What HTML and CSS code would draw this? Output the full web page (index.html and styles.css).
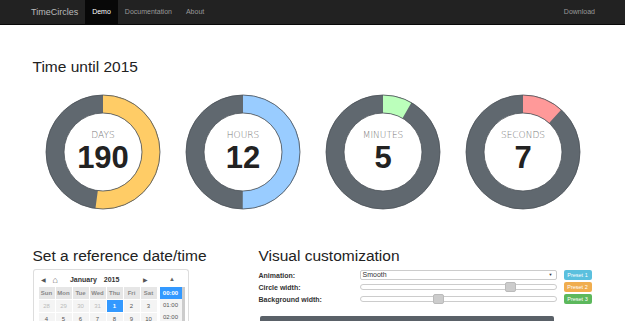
FILE: index.html
```html
<!DOCTYPE html>
<html lang="en">
<head>
    <meta charset="UTF-8">
    <meta name="viewport" content="width=device-width, initial-scale=1.0">
    <title>TimeCircles</title>
    <link rel="stylesheet" href="styles.css">
</head>
<body>
    <nav class="navbar">
        <a class="brand" href="#">TimeCircles</a>
        <a class="nav-link active" href="#">Demo</a>
        <a class="nav-link" href="#">Documentation</a>
        <a class="nav-link" href="#">About</a>
        <a class="nav-link right" href="#">Download</a>
    </nav>

    <main class="container">
        <h1>Time until 2015</h1>

        <div class="circles">
            <div class="circle">
                <svg width="116" height="116" viewBox="0 0 116 116">
                    <circle cx="58" cy="58" r="48" class="ring-bg"/>
                    <circle cx="58" cy="58" r="48" class="ring" stroke="#ffcc66" stroke-dasharray="157 400" transform="rotate(-90 58 58)"/>
                    <circle cx="58" cy="58" r="57" class="edge"/>
                    <circle cx="58" cy="58" r="39" class="edge"/>
                    <text x="58" y="44" class="unit">DAYS</text>
                    <text x="58" y="74" class="value">190</text>
                </svg>
            </div>
            <div class="circle">
                <svg width="116" height="116" viewBox="0 0 116 116">
                    <circle cx="58" cy="58" r="48" class="ring-bg"/>
                    <circle cx="58" cy="58" r="48" class="ring" stroke="#99ccff" stroke-dasharray="150.8 400" transform="rotate(-90 58 58)"/>
                    <circle cx="58" cy="58" r="57" class="edge"/>
                    <circle cx="58" cy="58" r="39" class="edge"/>
                    <text x="58" y="44" class="unit">HOURS</text>
                    <text x="58" y="74" class="value">12</text>
                </svg>
            </div>
            <div class="circle">
                <svg width="116" height="116" viewBox="0 0 116 116">
                    <circle cx="58" cy="58" r="48" class="ring-bg"/>
                    <circle cx="58" cy="58" r="48" class="ring" stroke="#bbffbb" stroke-dasharray="25.1 400" transform="rotate(-90 58 58)"/>
                    <circle cx="58" cy="58" r="57" class="edge"/>
                    <circle cx="58" cy="58" r="39" class="edge"/>
                    <text x="58" y="44" class="unit">MINUTES</text>
                    <text x="58" y="74" class="value">5</text>
                </svg>
            </div>
            <div class="circle">
                <svg width="116" height="116" viewBox="0 0 116 116">
                    <circle cx="58" cy="58" r="48" class="ring-bg"/>
                    <circle cx="58" cy="58" r="48" class="ring" stroke="#ff9999" stroke-dasharray="35.2 400" transform="rotate(-90 58 58)"/>
                    <circle cx="58" cy="58" r="57" class="edge"/>
                    <circle cx="58" cy="58" r="39" class="edge"/>
                    <text x="58" y="44" class="unit">SECONDS</text>
                    <text x="58" y="74" class="value">7</text>
                </svg>
            </div>
        </div>

        <div class="bottom">
            <section>
                <h2>Set a reference date/time</h2>
                <div class="picker">
                    <div class="calendar">
                        <div class="cal-head">
                            <span class="arrow">&#9664;</span>
                            <span class="home">&#8962;</span>
                            <span class="month">January</span>
                            <span class="month">2015</span>
                            <span class="arrow next">&#9654;</span>
                        </div>
                        <div class="days">
                            <span class="dow">Sun</span><span class="dow">Mon</span><span class="dow">Tue</span><span class="dow">Wed</span><span class="dow">Thu</span><span class="dow">Fri</span><span class="dow">Sat</span>
                            <span class="muted">28</span><span class="muted">29</span><span class="muted">30</span><span class="muted">31</span><span class="today">1</span><span>2</span><span>3</span>
                            <span>4</span><span>5</span><span>6</span><span>7</span><span>8</span><span>9</span><span>10</span>
                        </div>
                    </div>
                    <div class="times">
                        <div class="time-up">&#9650;</div>
                        <div class="time-list">
                            <span class="selected">00:00</span>
                            <span>01:00</span>
                            <span>02:00</span>
                        </div>
                    </div>
                </div>
            </section>
            <section>
                <h2>Visual customization</h2>
                <div class="options">
                    <label>Animation:</label>
                    <div class="select">Smooth<span class="caret">&#9660;</span></div>
                    <button class="preset blue">Preset 1</button>

                    <label>Circle width:</label>
                    <div class="slider"><span class="thumb" style="left: 74%"></span></div>
                    <button class="preset orange">Preset 2</button>

                    <label>Background width:</label>
                    <div class="slider"><span class="thumb" style="left: 37%"></span></div>
                    <button class="preset green">Preset 3</button>
                </div>
                <div class="dark-bar"></div>
            </section>
        </div>
    </main>
</body>
</html>
```

FILE: styles.css
```css
body {
    font-family: "Liberation Sans", Arial, sans-serif;
    margin: 0;
    padding: 0;
    background-color: #fff;
    color: #333;
    overflow: hidden;
}
a {
    text-decoration: none;
}
.navbar {
    display: flex;
    align-items: stretch;
    height: 24px;
    background-color: #222;
    border-bottom: 1px solid #080808;
    padding: 0 23px 0 31px;
}
.brand {
    color: #bbb;
    font-size: 9px;
    line-height: 24px;
    margin-right: 7px;
}
.nav-link {
    color: #999;
    font-size: 7px;
    line-height: 24px;
    padding: 0 7px;
}
.nav-link.active {
    color: #fff;
    background-color: #080808;
}
.nav-link.right {
    margin-left: auto;
}
.container {
    width: 560px;
    margin: 0 auto;
}
h1, h2 {
    font-weight: normal;
    font-size: 15.5px;
    line-height: 18px;
    color: #222;
    margin: 0;
}
h1 {
    margin-top: 33px;
}
.circles {
    display: grid;
    grid-template-columns: repeat(4, 1fr);
    margin-top: 18px;
}
.circle {
    display: flex;
    justify-content: center;
}
.circle svg {
    display: block;
}
.ring-bg {
    fill: none;
    stroke: #60686f;
    stroke-width: 18;
}
.ring {
    fill: none;
    stroke-width: 18;
}
.edge {
    fill: none;
    stroke: #4b5258;
    stroke-width: 0.8;
}
.unit {
    font-family: "DejaVu Sans", sans-serif;
    font-weight: 200;
    font-size: 9px;
    fill: #777;
    text-anchor: middle;
}
.value {
    font-family: "Liberation Sans", Arial, sans-serif;
    font-weight: bold;
    font-size: 31px;
    fill: #222;
    text-anchor: middle;
}
.bottom {
    display: grid;
    grid-template-columns: 226px 1fr;
    margin-top: 37px;
}
.picker {
    display: flex;
    width: 146px;
    margin-top: 4px;
    padding: 2px 3px 0 5px;
    border: 1px solid #ddd;
    border-bottom: none;
    border-radius: 3px 3px 0 0;
    gap: 3px;
}
.cal-head {
    display: flex;
    align-items: center;
    height: 15px;
    font-size: 7px;
    color: #333;
}
.arrow {
    font-size: 6px;
    color: #555;
    margin-left: 2px;
}
.arrow.next {
    margin-left: 17px;
}
.home {
    font-size: 9px;
    margin: 0 12px 0 7px;
    color: #555;
}
.month {
    font-weight: bold;
    margin-right: 7px;
}
.days {
    display: grid;
    grid-template-columns: repeat(7, 16px);
    grid-auto-rows: 12px;
    gap: 1px;
    background-color: #fff;
}
.days span {
    display: flex;
    align-items: center;
    justify-content: center;
    font-size: 6px;
    color: #555;
    background-color: #f4f4f4;
}
.days .dow {
    background-color: #e6e6e6;
    color: #888;
    font-weight: bold;
}
.days .muted {
    color: #bbb;
}
.days .today {
    background-color: #3399ff;
    color: #fff;
    font-weight: bold;
}
.times {
    width: 30px;
}
.time-up {
    height: 15px;
    font-size: 6px;
    color: #666;
    text-align: center;
    line-height: 15px;
}
.time-list {
    display: flex;
    flex-direction: column;
    border-right: 3px solid #ccc;
    background-color: #f4f4f4;
}
.time-list span {
    height: 12px;
    line-height: 12px;
    font-size: 6px;
    color: #555;
    text-align: center;
}
.time-list .selected {
    background-color: #3399ff;
    color: #fff;
    font-weight: bold;
}
.options {
    display: grid;
    grid-template-columns: 101px 197px 35px;
    grid-auto-rows: 12px;
    align-items: center;
    margin-top: 4px;
}
.options label {
    font-size: 7px;
    font-weight: bold;
    color: #333;
}
.select {
    position: relative;
    height: 8px;
    border: 1px solid #ccc;
    border-radius: 2px;
    font-size: 7px;
    line-height: 8px;
    padding-left: 2px;
    color: #333;
}
.caret {
    position: absolute;
    right: 3px;
    top: 0;
    font-size: 4px;
}
.slider {
    position: relative;
    height: 4px;
    border: 1px solid #ccc;
    border-radius: 3px;
}
.thumb {
    position: absolute;
    top: -3px;
    width: 9px;
    height: 8px;
    border-radius: 2px;
    background-color: #ccc;
    border: 1px solid #bbb;
}
.preset {
    justify-self: end;
    width: 28px;
    height: 10px;
    padding: 0;
    border: none;
    border-radius: 2px;
    color: #fff;
    font-family: "Liberation Sans", Arial, sans-serif;
    font-size: 5.5px;
}
.preset.blue {
    background-color: #5bc0de;
}
.preset.orange {
    background-color: #f0ad4e;
}
.preset.green {
    background-color: #5cb85c;
}
.dark-bar {
    width: 294px;
    height: 10px;
    margin: 11px 0 0 1px;
    background-color: #5a6168;
    border-radius: 2px 2px 0 0;
}
```
